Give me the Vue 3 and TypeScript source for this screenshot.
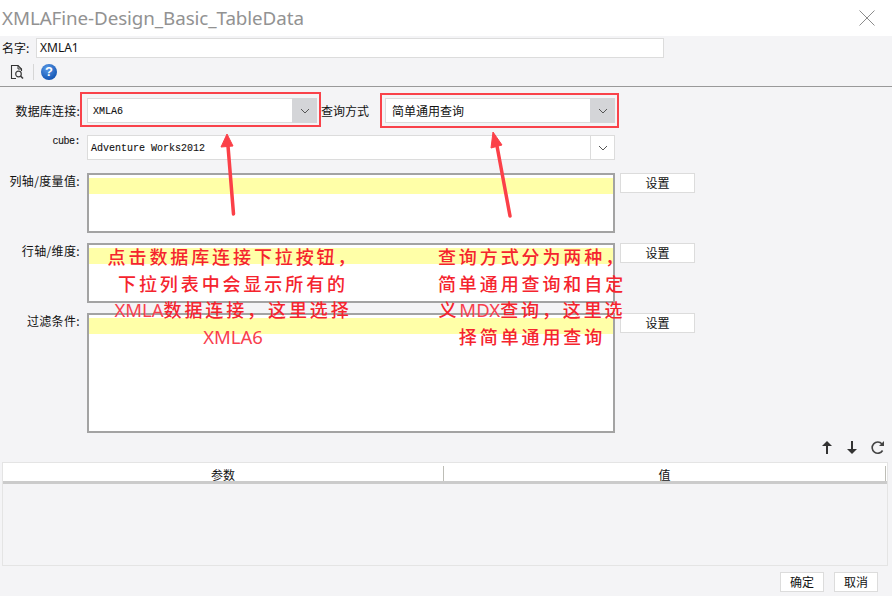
<script setup lang="ts">
const listRows = [
  { label: '列轴/度量值:', cls: 'h60' },
  { label: '行轴/维度:', cls: 'h60' },
  { label: '过滤条件:', cls: 'h120' },
]
</script>

<template>
  <div class="dialog">
    <header class="titlebar">
      <span class="title">XMLAFine-Design_Basic_TableData</span>
      <svg class="close" width="16" height="16" viewBox="0 0 16 16">
        <path d="M0.5 0.5 15.5 15.5M15.5 0.5 0.5 15.5" stroke="#8c8c8c" stroke-width="1" fill="none" />
      </svg>
    </header>

    <div class="name-row">
      <span class="name-label">名字:</span>
      <div class="name-input">XMLA1</div>
    </div>

    <div class="toolbar">
      <svg class="doc-icon" width="14" height="16" viewBox="0 0 14 16">
        <path d="M6 14.5H1.5V1.5H8L11.5 5V7" fill="none" stroke="#333" stroke-width="1.1" />
        <path d="M8 1.5V5H11.5" fill="none" stroke="#333" stroke-width="1" />
        <circle cx="8.5" cy="10" r="2.8" fill="none" stroke="#3d3d3d" stroke-width="1.2" />
        <path d="M10.5 12 13 14.5" stroke="#3d3d3d" stroke-width="1.6" />
      </svg>
      <span class="tool-sep"></span>
      <span class="help">?</span>
    </div>

    <div class="form">
      <div class="conn-row">
        <span class="lbl conn-lbl">数据库连接:</span>
        <div class="red-box first">
          <div class="combo">
            <span class="mono val">XMLA6</span>
            <span class="arrow grey">
              <svg width="10" height="6" viewBox="0 0 10 6"><path d="M1 1 5 5 9 1" fill="none" stroke="#555" stroke-width="1" /></svg>
            </span>
          </div>
        </div>
        <span class="lbl query-lbl">查询方式</span>
        <div class="red-box second">
          <div class="combo">
            <span class="val cjk">简单通用查询</span>
            <span class="arrow grey">
              <svg width="10" height="6" viewBox="0 0 10 6"><path d="M1 1 5 5 9 1" fill="none" stroke="#555" stroke-width="1" /></svg>
            </span>
          </div>
        </div>
      </div>

      <div class="cube-row">
        <span class="cube-lbl mono">cube:</span>
        <div class="combo wide">
          <span class="mono val cube-val">Adventure Works2012</span>
          <span class="arrow lined">
            <svg width="10" height="6" viewBox="0 0 10 6"><path d="M1 1 5 5 9 1" fill="none" stroke="#555" stroke-width="1" /></svg>
          </span>
        </div>
      </div>

      <div class="lists">
        <div v-for="row in listRows" :key="row.label" class="list-row">
          <span class="lbl list-lbl">{{ row.label }}</span>
          <div class="listbox" :class="row.cls"><div class="hl"></div></div>
          <button class="btn set-btn" type="button">设置</button>
        </div>
      </div>
    </div>

    <div class="param-tools">
      <svg width="12" height="15" viewBox="0 0 12 15"><path d="M6 14V4" stroke="#333" stroke-width="2" /><path d="M1 6 6 1 11 6Z" fill="#333" /></svg>
      <svg width="12" height="15" viewBox="0 0 12 15"><path d="M6 1V11" stroke="#333" stroke-width="2" /><path d="M1 9 6 14 11 9Z" fill="#333" /></svg>
      <svg width="14" height="15" viewBox="0 0 14 15"><path d="M11.6 10.5A5.6 5.6 0 1 1 11 4" fill="none" stroke="#444" stroke-width="1.6" /><path d="M13 1V6H8Z" fill="#444" /></svg>
    </div>

    <div class="param-table">
      <div class="thead">
        <div class="th th-a">参数</div>
        <div class="th th-b">值</div>
      </div>
    </div>

    <footer class="footer">
      <button class="btn foot-btn ok" type="button">确定</button>
      <button class="btn foot-btn cancel" type="button">取消</button>
    </footer>

    <svg class="arrows" width="892" height="596" viewBox="0 0 892 596">
      <path d="M233.5 214 228 146" stroke="#fb4048" stroke-width="3.5" stroke-linecap="round" fill="none" />
      <path d="M227 134 221 147 233 146Z" fill="#fb4048" stroke="#fb4048" stroke-linejoin="round" />
      <path d="M510 216 497 146" stroke="#fb4048" stroke-width="3.5" stroke-linecap="round" fill="none" />
      <path d="M493 132 491 148 502 145Z" fill="#fb4048" stroke="#fb4048" stroke-linejoin="round" />
    </svg>

    <div class="note note-left">
      <div>点击数据库连接下拉按钮，</div>
      <div>下拉列表中会显示所有的</div>
      <div><span class="latin">XMLA</span>数据连接，这里选择</div>
      <div><span class="latin">XMLA6</span></div>
    </div>
    <div class="note note-right">
      <div>查询方式分为两种，</div>
      <div>简单通用查询和自定</div>
      <div>义<span class="latin">MDX</span>查询，这里选</div>
      <div>择简单通用查询</div>
    </div>
  </div>
</template>

<style>
html, body { margin: 0; padding: 0; background: #f4f4f6; }
</style>

<style scoped>
.dialog {
  position: relative;
  width: 892px;
  height: 596px;
  overflow: hidden;
  background: #f4f4f6;
  color: #111;
  font: 12px/16px "Noto Sans CJK SC", "Noto Sans", sans-serif;
  display: flex;
  flex-direction: column;
}
.titlebar {
  height: 36px;
  flex: none;
  background: #fff;
  display: flex;
  align-items: center;
  justify-content: space-between;
  padding: 0 17px 0 2px;
}
.title {
  font: 18.8px/24px "Noto Sans", sans-serif;
  color: #929292;
  letter-spacing: -0.08px;
}
.close { display: block; }
.name-row {
  height: 24px;
  flex: none;
  display: flex;
  align-items: center;
  padding-left: 2px;
}
.name-label { width: 34px; flex: none; }
.name-input {
  box-sizing: border-box;
  width: 628px;
  height: 20px;
  background: #fff;
  border: 1px solid #dcdcdc;
  padding-left: 3px;
  line-height: 18px;
  font-family: "Noto Sans", sans-serif;
}
.toolbar {
  box-sizing: border-box;
  height: 27px;
  flex: none;
  display: flex;
  align-items: center;
  padding: 0 0 2px 10px;
  border-bottom: 1px solid #999;
}
.doc-icon { display: block; }
.tool-sep {
  width: 1px;
  height: 16px;
  background: #d6d6d6;
  margin-left: 9px;
}
.help {
  width: 16px;
  height: 16px;
  margin-left: 7px;
  border-radius: 50%;
  background: radial-gradient(circle at 40% 30%, #5b9be8, #1456b4 75%);
  color: #fff;
  text-align: center;
  font: bold 13px/16px "Liberation Sans", sans-serif;
}
.form {
  flex: none;
  display: flex;
  flex-direction: column;
}
.lbl { flex: none; text-align: right; letter-spacing: 0.2px; }
.conn-row {
  display: flex;
  margin-top: 5px;
  height: 36px;
}
.conn-lbl {
  width: 80px;
  line-height: 38px;
}
.query-lbl {
  width: 59px;
  text-align: left;
  line-height: 38px;
  letter-spacing: 0;
}
.red-box {
  box-sizing: border-box;
  border: 2px solid #f9424a;
  height: 35px;
  display: flex;
}
.red-box.first {
  width: 241px;
  padding: 4px 2px 4px 5px;
}
.red-box.second {
  width: 239px;
  margin-top: 1px;
  padding: 3px 2px 3px 3px;
}
.combo {
  box-sizing: border-box;
  flex: 1;
  height: 25px;
  display: flex;
  align-items: stretch;
  background: #fff;
  border: 1px solid #dcdcdc;
}
.val {
  flex: 1;
  line-height: 23px;
  padding-left: 5px;
}
.mono {
  font-family: "Liberation Mono", monospace;
  font-size: 10px;
  line-height: 25px;
  -webkit-text-stroke: 0.1px #111;
}
.cjk { padding-left: 6px; }
.arrow {
  width: 25px;
  flex: none;
  margin: -1px -1px -1px 0;
  display: flex;
  align-items: center;
  justify-content: center;
}
.arrow.grey { background: #d4d5d8; }
.arrow.lined { border-left: 1px solid #dcdcdc; box-sizing: border-box; margin: 0; width: 24px; }
.cube-row {
  display: flex;
  margin-top: 7px;
}
.cube-lbl {
  box-sizing: border-box;
  width: 87px;
  flex: none;
  text-align: right;
  padding-right: 7px;
  font-size: 10px;
  letter-spacing: -0.5px;
  line-height: 14px;
}
.combo.wide {
  flex: none;
  width: 528px;
}
.cube-val { padding-left: 3px; line-height: 26px; }
.lists {
  display: flex;
  flex-direction: column;
  gap: 10px;
  margin-top: 13px;
}
.list-row {
  display: flex;
  align-items: flex-start;
}
.list-lbl {
  box-sizing: border-box;
  width: 87px;
  padding-right: 7px;
  letter-spacing: 0.35px;
}
.listbox {
  box-sizing: border-box;
  width: 528px;
  background: #fff;
  border: 2px solid #a3a3a3;
  padding-top: 3px;
}
.h60 { height: 60px; }
.h120 { height: 120px; }
.hl {
  height: 16px;
  background: #ffffa8;
}
.btn {
  box-sizing: border-box;
  margin: 0;
  padding: 0;
  background: #fff;
  border: 1px solid #dcdcdc;
  color: #111;
  font: 12px/16px "Noto Sans CJK SC", sans-serif;
}
.set-btn {
  width: 75px;
  height: 20px;
  margin-left: 5px;
}
.param-tools {
  flex: none;
  height: 29px;
  display: flex;
  align-items: center;
  justify-content: flex-end;
  gap: 13px;
  padding-right: 7px;
}
.param-table {
  box-sizing: border-box;
  flex: none;
  width: 886px;
  height: 104px;
  margin-left: 2px;
  border: 1px solid #e4e4e4;
}
.thead {
  display: flex;
  height: 21px;
  box-sizing: border-box;
  background: #fff;
  border-bottom: 3px solid #cbcbcb;
  padding-top: 3px;
}
.th {
  height: 15px;
  text-align: center;
  line-height: 18px;
}
.th-a {
  width: 440px;
  border-right: 1px solid #bdbdb6;
}
.th-b {
  flex: 1;
  border-right: 1px solid #bdbdb6;
  margin-right: 1px;
}
.footer {
  flex: none;
  display: flex;
  padding: 6px 0 0 780px;
}
.foot-btn {
  height: 20px;
}
.ok { width: 44px; }
.cancel { width: 44px; margin-left: 10px; }
.arrows {
  position: absolute;
  left: 0;
  top: 0;
  pointer-events: none;
}
.note {
  position: absolute;
  top: 243px;
  text-align: center;
  color: #f5242e;
  font: 500 18px/26.5px "Noto Sans CJK SC", sans-serif;
  letter-spacing: 2.9px;
  white-space: nowrap;
}
.note > div { height: 26.5px; }
.note-left { left: 102px; width: 262px; }
.note-right { left: 432px; width: 200px; }
.latin {
  font: 400 18.5px/20px "Noto Sans", sans-serif;
  letter-spacing: 0;
  color: #f8404e;
}
</style>
